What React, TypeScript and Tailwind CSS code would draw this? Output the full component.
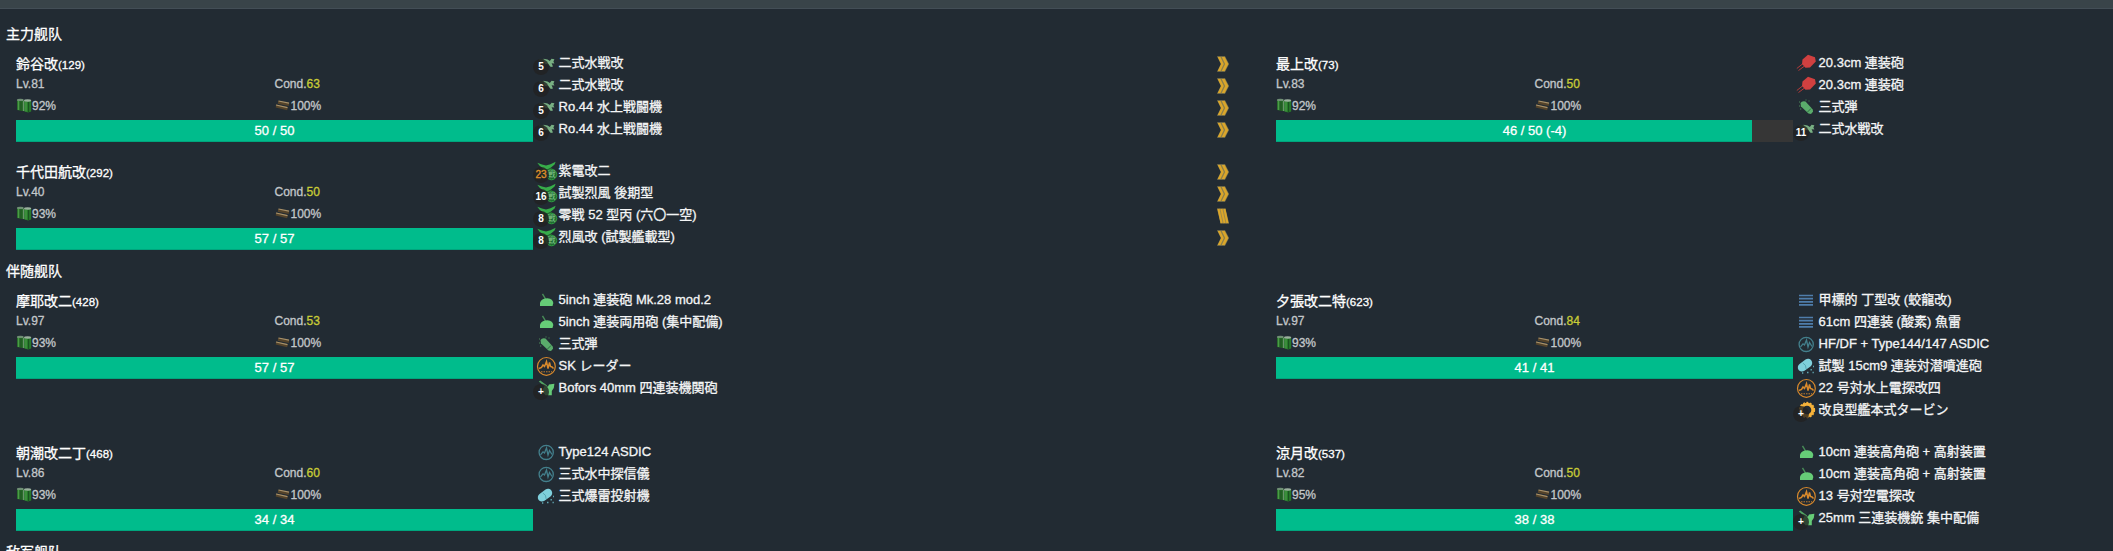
import type { ReactNode } from "react";

type IconName =
  | "seaplane" | "fighter" | "redgun" | "greengun" | "shell" | "radar"
  | "sonar" | "depth" | "torpedo" | "turbine" | "aagun";

interface Equip {
  icon: IconName;
  name: string;
  badge?: string;
  hot?: boolean;
  rank?: "chevron" | "bars";
}

interface Ship {
  name: string;
  id: number;
  lv: number;
  cond: number;
  fuel: number;
  hp: string;
  ratio: number;
  equips: Equip[];
}

const icons: Record<IconName, ReactNode> = {
  seaplane: (
    <g fill="#78b083">
      <path d="M3.5 6 L9 6.2 L10 11.5 L4 11 Z" fill="#3b5a44" />
      <path d="M7.5 5.8 L11.5 6.4 L13.8 8 L15.6 5.8 L18.4 6.2 L17.4 8.4 L18.4 10.4 L15.6 10.2 L17 13.6 L14.8 14 L12.4 11.2 L9.4 11 L8 9 Z" />
    </g>
  ),
  fighter: (
    <>
      <path d="M3 9 L9 6 L16 7 L13 17 L5 17 Z" fill="#22592f" />
      <path d="M1.3 1.8 L6 3.4 L10 4.6 L14.5 3.2 L19.6 0.8 L18.6 3.6 L15 6.6 L11 8.6 L7 7.4 L3.4 4.6 Z" fill="#37ad4a" />
      <circle cx="15.5" cy="13.5" r="5.3" fill="#1f6b30" stroke="#309c43" strokeWidth="1" />
      <text x="15.5" y="16.3" fontSize="8" fill="#86c990" textAnchor="middle" fontFamily="Noto Sans CJK JP">戦</text>
    </>
  ),
  redgun: (
    <g>
      <path d="M0.8 15.5 L8 9.8 M2.5 17.5 L9.5 12.3" stroke="#b43a3a" strokeWidth="1" />
      <path d="M12 1.7 L19 4.3 L19.8 8.5 L14 14.5 L9.5 14.8 L6 11 L6.5 6.5 Z" fill="#d04040" />
    </g>
  ),
  greengun: (
    <g>
      <path d="M6.5 3.8 L9.5 9" stroke="#488d58" strokeWidth="1.4" />
      <path d="M4 16 L4 12.5 Q6 8.3 11.5 8.3 Q17 9 17.3 13 L16.5 16 Z" fill="#66cc77" />
    </g>
  ),
  shell: (
    <g>
      <path d="M4.5 6 Q6 3.5 9.5 4.5 L16.8 12.5 L17 14.8 L15 17 L12.5 16.5 L5 9.5 Z" fill="#5aac6b" />
      <path d="M15 11.5 L11.5 15" stroke="#2f6b41" strokeWidth="1" />
      <path d="M3 9h1.3M4 12h1.3M9.5 3h1M12.5 4h1M3 5h1" stroke="#4a8a5a" strokeWidth="1.2" />
    </g>
  ),
  radar: (
    <g fill="none" stroke="#d8892c" strokeWidth="1.2">
      <circle cx="10.4" cy="10.4" r="8.9" />
      <path d="M3 12.5 L5.5 11.5 L7 9 L8.5 10.5 L10.5 5.5 L12 12.5 L13.5 6.5 L14.5 10.5 L16 11 L17.5 12.5" strokeWidth="1.5" />
      <path d="M5 15.8h11" strokeWidth="0.9" strokeDasharray="1.5 1" />
    </g>
  ),
  sonar: (
    <g fill="none" stroke="#437f8c" strokeWidth="1.3">
      <circle cx="10.2" cy="10.4" r="7.1" />
      <path d="M4.5 12.8 L7 9.8 L8.5 11 L10.5 6 L12 13 L13.5 8.5 L16 12.5" />
    </g>
  ),
  depth: (
    <g>
      <path d="M6 11.4 L12 7" stroke="#7fd0dc" strokeWidth="8.4" strokeLinecap="round" />
      <path d="M6.8 7 Q10.3 8.5 10.2 13" stroke="#4fa1ae" strokeWidth="0.9" fill="none" />
      <path d="M6 17h1.3M11 16.5h1.5M14.5 13.7h1.4M17 10.5h1M16.5 16.5h1.3" stroke="#5fa6b2" strokeWidth="1.5" />
    </g>
  ),
  torpedo: (
    <path d="M3 5.5h14M3 8.7h14M3 11.8h14M3 14.9h14" stroke="#4f7dab" strokeWidth="1.7" />
  ),
  turbine: (
    <g fill="none" stroke="#f5b23a">
      <circle cx="11" cy="10" r="5.8" strokeWidth="3" />
      <circle cx="11" cy="10" r="7.4" strokeWidth="1.5" strokeDasharray="2 1.4" />
    </g>
  ),
  aagun: (
    <g fill="#66cc77">
      <path d="M2.8 3.4 L4.3 2.4 L11 7.4 L10 9.5 Z" fill="#52a563" />
      <path d="M8.5 8 L12 8.6 L13 6.6 L18.4 5.8 L17.8 10 L15.8 13 L15.8 17.2 L9.5 17.2 L6 13 Z" />
    </g>
  ),
};

function Rank({ kind }: { kind: "chevron" | "bars" }) {
  return (
    <svg className="h-[22px] w-[12px] shrink-0" viewBox="0 0 12 22">
      {kind === "chevron" ? (
        <>
          <path d="M0 3.3 H8 L12 11 L8 18.7 H0 L3.8 11 Z" fill="#8a7f4c" />
          <path d="M0.8 4 H3.4 L6.8 11 L3.4 18 H0.8 L4.2 11 Z M4.8 4 H7.6 L11.2 11 L7.6 18 H4.8 L8.2 11 Z" fill="#dba62a" />
        </>
      ) : (
        <>
          <path d="M0 3.5 H8.5 L12 18.5 H3.5 Z" fill="#a08a48" />
          <path d="M1.5 4 L4.6 18 M4.4 4 L7.5 18 M7.4 4 L10.4 18" stroke="#dba62a" strokeWidth="1.9" />
        </>
      )}
    </svg>
  );
}

function Fuel() {
  return (
    <svg className="h-[15px] w-[16px] shrink-0" viewBox="0 0 16 15">
      <path d="M1 2 H7.8 V13.2 L1 12 Z" fill="#2a6c2b" />
      <path d="M7.8 2.5 H15.2 V13.6 L12 14.6 L8 13.2 Z" fill="#277a2b" />
      <path d="M2.5 3 V12 M10 4 V13.6" stroke="#4a9c47" strokeWidth="1.2" />
      <path d="M5 3.5 V12.8 M12.6 4 V14" stroke="#1b501f" strokeWidth="1" />
      <path d="M7.7 3 V13" stroke="#8fae90" strokeWidth="0.8" />
      <ellipse cx="4.3" cy="1.9" rx="3.4" ry="1.2" fill="#6f8f74" />
      <ellipse cx="11.6" cy="2.5" rx="3.6" ry="1.2" fill="#9bb09e" />
    </svg>
  );
}

function Ammo() {
  return (
    <svg className="h-[15px] w-[16px] shrink-0" viewBox="0 0 16 15">
      <path d="M3 4.2 L14 6.6 M1 8 L12.5 10.8" stroke="#54432a" strokeWidth="3" />
      <path d="M3.5 3 L14 5.2 M1 7 L12.5 9.6" stroke="#a8916a" strokeWidth="1.2" />
    </svg>
  );
}

function EquipRow({ e }: { e: Equip }) {
  return (
    <div className="relative flex h-[22px] items-start pl-[3px] pr-[7px]">
      <svg className="h-[22px] w-[22px] shrink-0" viewBox="0 0 22 22">{icons[e.icon]}</svg>
      {e.badge && (
        <span
          className={`absolute top-[6px] left-0 flex h-4 w-4 items-center justify-center rounded-full bg-[#222]/80 text-[10px] leading-none ${
            e.hot ? "text-[#e0912b]" : "font-bold text-white [-webkit-text-stroke:0px]"
          }`}
        >
          {e.badge}
        </span>
      )}
      <span className="grow pl-[0.6px] text-[13px] leading-[20px] whitespace-nowrap text-[#f4f5f6]">{e.name}</span>
      {e.rank && <Rank kind={e.rank} />}
    </div>
  );
}

function ShipCard({ s }: { s: Ship }) {
  return (
    <div className="flex w-[1260px] shrink-0 items-start pt-2 pl-4">
      <div className="w-[517px] shrink-0">
        <div className="h-[21px] text-[14px] leading-[22px] text-white">
          {s.name}
          <span className="text-[11.5px]">({s.id})</span>
        </div>
        <div className="flex h-5 text-[12px] leading-5 text-[#c3c7ca]">
          <div className="w-1/2">Lv.{s.lv}</div>
          <div className="w-1/2">
            Cond.<span className="text-[#c9cb36]">{s.cond}</span>
          </div>
        </div>
        <div className="flex h-[22px] items-center pt-px text-[12px] text-[#c3c7ca]">
          <div className="flex w-1/2 items-center"><Fuel />{s.fuel}%</div>
          <div className="flex w-1/2 items-center"><Ammo />100%</div>
        </div>
        <div className="mt-1 grid h-[22px] bg-[#363636]">
          <div
            className="col-start-1 row-start-1 border-b border-[#00a57d] bg-[#00bc8c]"
            style={{ width: `${s.ratio * 100}%` }}
          />
          <div className="col-start-1 row-start-1 text-center text-[13px] leading-[21px] text-white">{s.hp}</div>
        </div>
      </div>
      <div className="w-[703px] shrink-0 pb-3">
        {s.equips.map((e, i) => <EquipRow key={i} e={e} />)}
      </div>
    </div>
  );
}

function Fleet({ title, rows }: { title: string; rows: Ship[][] }) {
  return (
    <section>
      <h2 className="h-[21px] pl-[6px] text-[14px] leading-[21px] text-white">{title}</h2>
      {rows.map((row, i) => (
        <div key={i} className="flex min-h-[108px]">
          {row.map((s) => <ShipCard key={s.id} s={s} />)}
        </div>
      ))}
    </section>
  );
}

const mainFleet: Ship[][] = [
  [
    {
      name: "鈴谷改", id: 129, lv: 81, cond: 63, fuel: 92, hp: "50 / 50", ratio: 1,
      equips: [
        { icon: "seaplane", badge: "5", name: "二式水戦改", rank: "chevron" },
        { icon: "seaplane", badge: "6", name: "二式水戦改", rank: "chevron" },
        { icon: "seaplane", badge: "5", name: "Ro.44 水上戦闘機", rank: "chevron" },
        { icon: "seaplane", badge: "6", name: "Ro.44 水上戦闘機", rank: "chevron" },
      ],
    },
    {
      name: "最上改", id: 73, lv: 83, cond: 50, fuel: 92, hp: "46 / 50 (-4)", ratio: 0.92,
      equips: [
        { icon: "redgun", name: "20.3cm 連装砲" },
        { icon: "redgun", name: "20.3cm 連装砲" },
        { icon: "shell", name: "三式弾" },
        { icon: "seaplane", badge: "11", name: "二式水戦改" },
      ],
    },
  ],
  [
    {
      name: "千代田航改", id: 292, lv: 40, cond: 50, fuel: 93, hp: "57 / 57", ratio: 1,
      equips: [
        { icon: "fighter", badge: "23", hot: true, name: "紫電改二", rank: "chevron" },
        { icon: "fighter", badge: "16", name: "試製烈風 後期型", rank: "chevron" },
        { icon: "fighter", badge: "8", name: "零戦 52 型丙 (六〇一空)", rank: "bars" },
        { icon: "fighter", badge: "8", name: "烈風改 (試製艦載型)", rank: "chevron" },
      ],
    },
  ],
];

const escortFleet: Ship[][] = [
  [
    {
      name: "摩耶改二", id: 428, lv: 97, cond: 53, fuel: 93, hp: "57 / 57", ratio: 1,
      equips: [
        { icon: "greengun", name: "5inch 連装砲 Mk.28 mod.2" },
        { icon: "greengun", name: "5inch 連装両用砲 (集中配備)" },
        { icon: "shell", name: "三式弾" },
        { icon: "radar", name: "SK レーダー" },
        { icon: "aagun", badge: "+", name: "Bofors 40mm 四連装機関砲" },
      ],
    },
    {
      name: "夕張改二特", id: 623, lv: 97, cond: 84, fuel: 93, hp: "41 / 41", ratio: 1,
      equips: [
        { icon: "torpedo", name: "甲標的 丁型改 (蛟龍改)" },
        { icon: "torpedo", name: "61cm 四連装 (酸素) 魚雷" },
        { icon: "sonar", name: "HF/DF + Type144/147 ASDIC" },
        { icon: "depth", name: "試製 15cm9 連装対潜噴進砲" },
        { icon: "radar", name: "22 号対水上電探改四" },
        { icon: "turbine", badge: "+", name: "改良型艦本式タービン" },
      ],
    },
  ],
  [
    {
      name: "朝潮改二丁", id: 468, lv: 86, cond: 60, fuel: 93, hp: "34 / 34", ratio: 1,
      equips: [
        { icon: "sonar", name: "Type124 ASDIC" },
        { icon: "sonar", name: "三式水中探信儀" },
        { icon: "depth", name: "三式爆雷投射機" },
      ],
    },
    {
      name: "涼月改", id: 537, lv: 82, cond: 50, fuel: 95, hp: "38 / 38", ratio: 1,
      equips: [
        { icon: "greengun", name: "10cm 連装高角砲 + 高射装置" },
        { icon: "greengun", name: "10cm 連装高角砲 + 高射装置" },
        { icon: "radar", name: "13 号対空電探改" },
        { icon: "aagun", badge: "+", name: "25mm 三連装機銃 集中配備" },
      ],
    },
  ],
];

export default function App() {
  return (
    <main lang="ja" className="h-[551px] w-full overflow-hidden bg-[#222b33] font-['Liberation_Sans','Noto_Sans_CJK_JP',sans-serif] [-webkit-text-stroke:0.3px]">
      <div className="mb-[15px] h-[9px] border-b border-[#434e56] bg-[#394449]" />
      <Fleet title="主力舰队" rows={mainFleet} />
      <Fleet title="伴随舰队" rows={escortFleet} />
      <Fleet title="敌军舰队" rows={[]} />
    </main>
  );
}
